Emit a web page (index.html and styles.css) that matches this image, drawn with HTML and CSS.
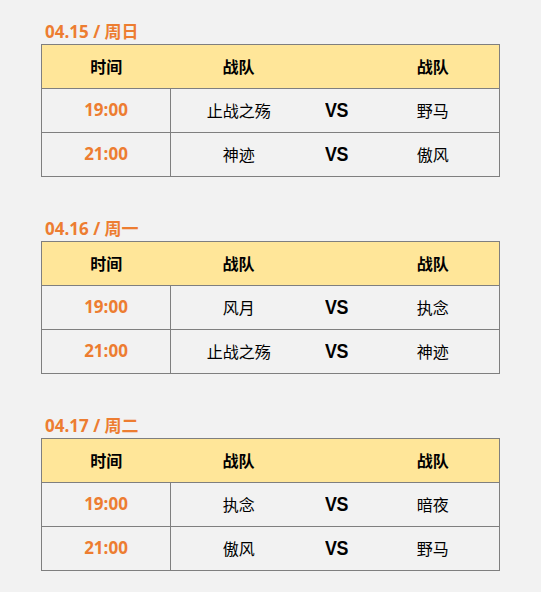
FILE: index.html
```html
<!DOCTYPE html>
<html>
<head>
<meta charset="utf-8">
<link rel="stylesheet" href="styles.css">
</head>
<body>
<div class="page">
  <section class="day">
    <h2 class="date">04.15 / 周日</h2>
    <table class="sched">
      <colgroup><col class="c1"><col class="c2"><col class="c3"><col class="c4"></colgroup>
      <tr class="head"><th>时间</th><th>战队</th><th></th><th>战队</th></tr>
      <tr><td class="time">19:00</td><td>止战之殇</td><td><span class="vs">VS</span></td><td>野马</td></tr>
      <tr><td class="time">21:00</td><td>神迹</td><td><span class="vs">VS</span></td><td>傲风</td></tr>
    </table>
  </section>
  <section class="day">
    <h2 class="date">04.16 / 周一</h2>
    <table class="sched">
      <colgroup><col class="c1"><col class="c2"><col class="c3"><col class="c4"></colgroup>
      <tr class="head"><th>时间</th><th>战队</th><th></th><th>战队</th></tr>
      <tr><td class="time">19:00</td><td>风月</td><td><span class="vs">VS</span></td><td>执念</td></tr>
      <tr><td class="time">21:00</td><td>止战之殇</td><td><span class="vs">VS</span></td><td>神迹</td></tr>
    </table>
  </section>
  <section class="day">
    <h2 class="date">04.17 / 周二</h2>
    <table class="sched">
      <colgroup><col class="c1"><col class="c2"><col class="c3"><col class="c4"></colgroup>
      <tr class="head"><th>时间</th><th>战队</th><th></th><th>战队</th></tr>
      <tr><td class="time">19:00</td><td>执念</td><td><span class="vs">VS</span></td><td>暗夜</td></tr>
      <tr><td class="time">21:00</td><td>傲风</td><td><span class="vs">VS</span></td><td>野马</td></tr>
    </table>
  </section>
</div>
</body>
</html>
```
FILE: styles.css
```css
html, body {
  margin: 0;
  padding: 0;
  background: #f2f2f2;
}
body {
  font-family: "Noto Sans CJK SC", "Noto Sans", sans-serif;
  color: #000;
}
.page {
  padding: 21px 0 0 41px;
  display: flex;
  flex-direction: column;
  gap: 41px;
}
.date {
  margin: 0 0 1px 4px;
  height: 22px;
  line-height: 21px;
  font-size: 17px;
  font-weight: bold;
  color: #ed7d31;
  font-family: "Open Sans", "Noto Sans CJK SC", sans-serif;
}
.sched {
  border-collapse: collapse;
  width: 458px;
  table-layout: fixed;
  border: 1px solid #7f7f7f;
}
.c1 { width: 129px; }
.c2 { width: 136px; }
.c3 { width: 60px; }
.c4 { width: 133px; }
.sched th, .sched td {
  height: 41px;
  padding: 0 0 2px;
  text-align: center;
  vertical-align: middle;
}
.head th {
  background: #ffe699;
  font-size: 16px;
  font-weight: bold;
  border-bottom: 1px solid #7f7f7f;
}
.sched td {
  font-size: 16px;
  border-top: 1px solid #7f7f7f;
}
.sched td.time {
  border-right: 1px solid #7f7f7f;
  color: #ed7d31;
  font-weight: bold;
  font-size: 17px;
  font-family: "Open Sans", sans-serif;
}
.vs {
  display: inline-block;
  font-family: "Liberation Sans", sans-serif;
  font-size: 21px;
  font-weight: bold;
  transform: scaleX(0.85);
  letter-spacing: -0.5px;
}
```
